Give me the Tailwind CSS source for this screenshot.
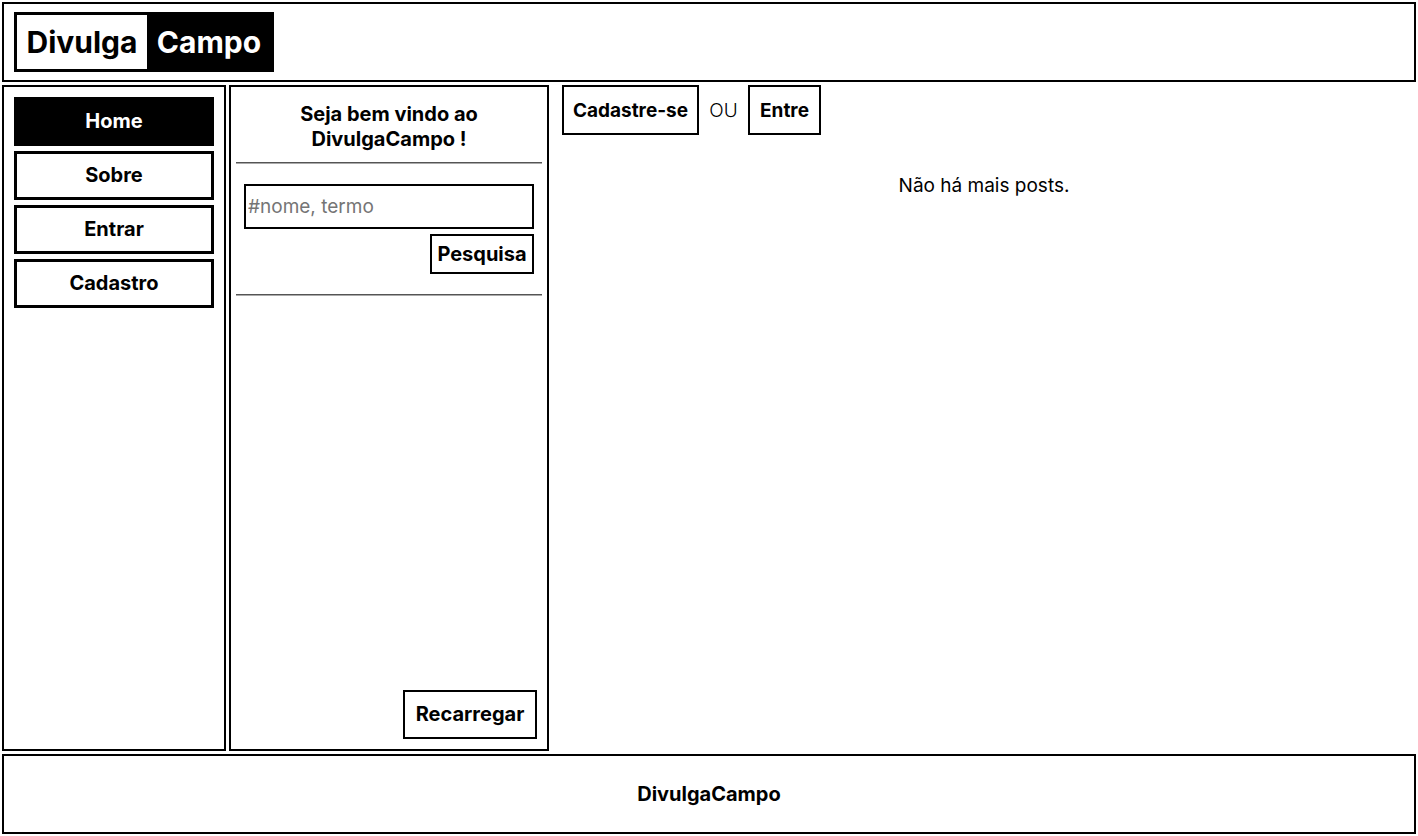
<!DOCTYPE html>
<html lang="pt-BR">
<head>
<meta charset="utf-8">
<meta name="viewport" content="width=device-width, initial-scale=1">
<title>DivulgaCampo</title>
<script src="https://cdn.jsdelivr.net/npm/@tailwindcss/browser@4"></script>
</head>
<body class="flex min-h-screen flex-col gap-[3px] bg-white p-[2px] font-['Inter',sans-serif] text-[19px] leading-[25px] text-black">
  <header class="border-2 border-black px-[10px] py-2">
    <a href="#" class="flex h-[60px] w-[260px] border-3 border-black text-[30px] font-bold">
      <span class="flex flex-1 items-center justify-center">Divulga</span>
      <span class="flex w-[124px] items-center justify-center bg-black text-white">Campo</span>
    </a>
  </header>
  <div class="flex flex-1 gap-[3px]">
    <nav class="flex w-56 shrink-0 flex-col gap-[5px] border-2 border-black p-[10px] text-center text-[20px] leading-[25px] font-bold">
      <a href="#" class="border-3 border-black bg-black py-[9px] text-white">Home</a>
      <a href="#" class="border-3 border-black py-[9px]">Sobre</a>
      <a href="#" class="border-3 border-black py-[9px]">Entrar</a>
      <a href="#" class="border-3 border-black py-[9px]">Cadastro</a>
    </nav>
    <aside class="flex w-80 shrink-0 flex-col border-2 border-black px-[5px] pb-[10px] pt-[15px]">
      <h1 class="text-center text-[20px] leading-[25px] font-bold">Seja bem vindo ao<br>DivulgaCampo !</h1>
      <hr class="mt-[10px] h-[2px] border-b border-t border-b-[#aaaaaa] border-t-[#555555]">
      <form class="flex flex-col items-end gap-[5px] px-2 py-5">
        <input type="text" aria-label="Pesquisa" placeholder="#nome, termo" class="h-[45px] w-full border-2 border-black px-[2px] placeholder:text-[#757575]">
        <button type="button" class="h-10 w-[104px] border-2 border-black text-[20px] font-bold">Pesquisa</button>
      </form>
      <hr class="h-[2px] border-b border-t border-b-[#aaaaaa] border-t-[#555555]">
      <button type="button" class="mr-[5px] mt-auto h-[49px] w-[134px] self-end border-2 border-black text-[20px] font-bold">Recarregar</button>
    </aside>
    <main class="flex-1">
      <div class="flex items-center gap-[10px] px-[10px]">
        <a href="#" class="flex h-[50px] w-[137px] items-center justify-center border-2 border-black font-bold">Cadastre-se</a>
        <span class="w-[29px] text-center font-light">OU</span>
        <a href="#" class="flex h-[50px] w-[73px] items-center justify-center border-2 border-black font-bold">Entre</a>
      </div>
      <p class="mt-[38px] text-center">Não há mais posts.</p>
    </main>
  </div>
  <footer class="flex h-20 items-center justify-center border-2 border-black text-[20px] font-bold">DivulgaCampo</footer>
</body>
</html>
